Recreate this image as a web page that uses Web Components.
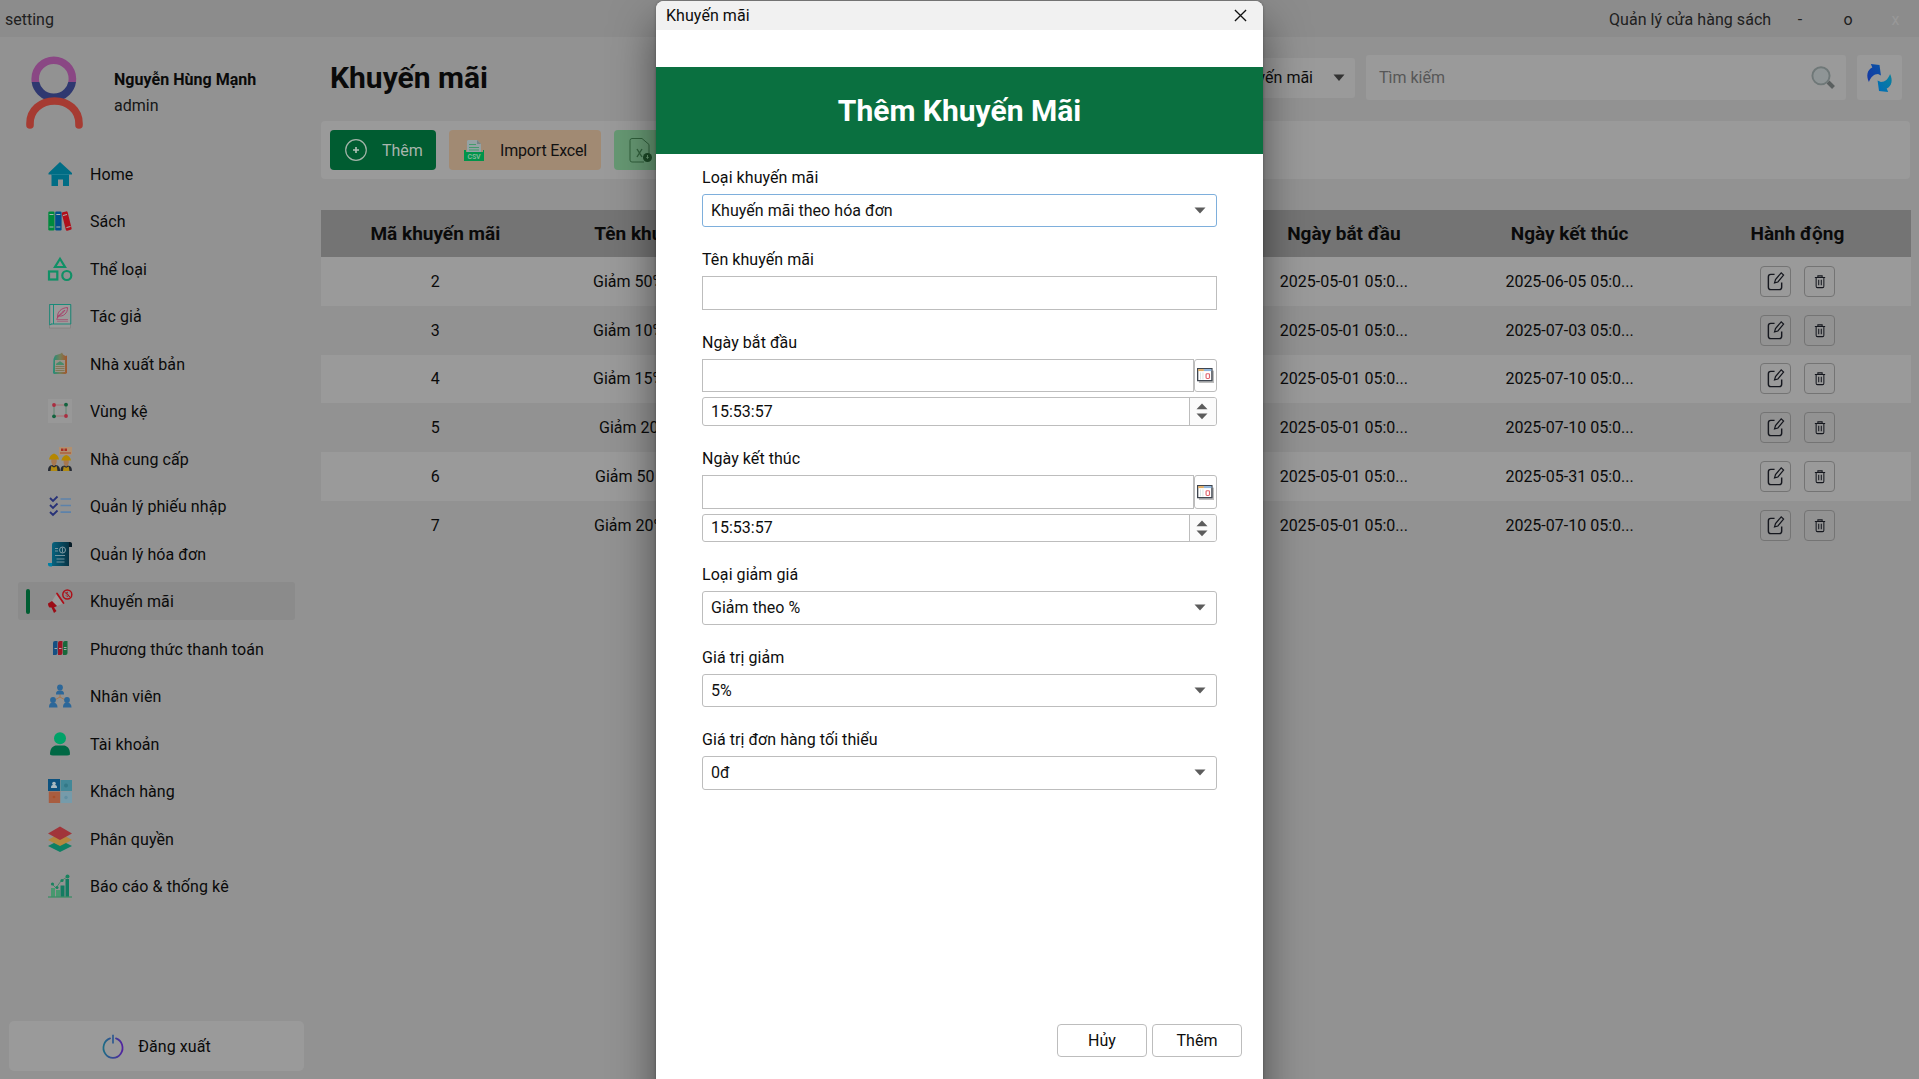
<!DOCTYPE html>
<html lang="vi">
<head>
<meta charset="utf-8">
<title>Quản lý cửa hàng sách</title>
<style>
html,body{margin:0;height:100%;overflow:hidden;background:#929292;font-family:Roboto,"Liberation Sans",sans-serif;font-size:16px;color:#0a0a0a}
</style>
</head>
<body>
<store-app></store-app>
<script>
const ICONS = {
avatar:['0 0 57 73','<defs><clipPath id="t"><rect width="57" height="26"/></clipPath><clipPath id="b"><rect y="26" width="57" height="30"/></clipPath></defs><g fill="none" stroke-width="7.6"><circle cx="27.8" cy="22.8" r="18.6" stroke="#8a4784" clip-path="url(#t)"/><circle cx="27.8" cy="22.8" r="18.6" stroke="#2f3870" clip-path="url(#b)"/><path d="M4 69V67.500C4 54 15 45 28.500 45S53 54 53 67.500V69" stroke="#a63b32" stroke-linecap="round"/></g>'],
home:['0 0 24 24','<path d="M12 0 24 11v1.500h-3V24h-6v-6.500H10V24H3.500V12.500H.5V11z" fill="#006d85"/><path d="M3.500 12.500h17.500" stroke="#27859a" stroke-width=".7"/>'],
books:['0 0 24 24','<rect x=".3" y="2.500" width="6.200" height="19" rx="1.300" fill="#008a3d"/><rect x="7.200" y="2.500" width="6.400" height="19" rx="1.300" fill="#00508c"/><rect x="15.700" y="2.600" width="6" height="19" rx="1.300" fill="#b0101c" transform="rotate(-14 18.500 12)"/><g fill="none" stroke="#a9b5b2" stroke-width="1"><path d="M1.500 5.500h4M1.500 18h4M8.300 5.500h4M8.300 18h4M15 6.500l4-1M18.500 18.500l4-1"/></g>'],
shapes:['0 0 24 24','<g fill="none" stroke="#109066" stroke-width="2.200"><path d="M12 1.800 17 10H7z"/><rect x="1" y="14.500" width="8.300" height="8"/><circle cx="18.800" cy="18.500" r="4.500"/></g>'],
author:['0 0 24 24','<rect x="1.700" y=".5" width="21" height="23.500" fill="#9b9b9b" stroke="#7a7471" stroke-width=".5"/><path d="M1.700 21V.5H22.800V20H3M5.500.5V20M1.700 21l2-1" fill="none" stroke="#0d8a78" stroke-width=".9"/><path d="M9.500 14C9 8 13 4 19.500 3.500 20 9 15 13 10.500 12M8.500 15.500c3-5 6-8 8-9M10 12c3-1 5-3 7-6" fill="none" stroke="#a83b68" stroke-width=".9"/><path d="M9 15.500h11M9 17.200h11" stroke="#a35a76" stroke-width=".9"/>'],
publisher:['0 0 24 24','<defs><linearGradient id="g"><stop stop-color="#1f8d78"/><stop offset=".5" stop-color="#74805a"/><stop offset="1" stop-color="#a2562b"/></linearGradient></defs><path d="M5.500 7 7 3.500 13 1.500 14 .500 15 2.500 17.500 4 19 3.500V21L17.500 22H6L5 21z" fill="url(#g)"/><path d="M7 8h10v12H7z" fill="#99938a"/><path d="M8 13c0-3 3-2 4-4 1 2 4 1 4 4z" fill="#488b6b"/><path d="M7.500 14.500h9M7.500 16.500h9M7.500 18.500h9" stroke="#7d7550" stroke-width=".9"/>'],
area:['0 0 24 24','<rect width="24" height="24" fill="#989898"/><path d="M6 6h12M6 17h12" stroke="#aa6268" stroke-width=".8"/><path d="M6 6v11M18 6v11" stroke="#538068" stroke-width=".8"/><g fill="#aa2d40"><circle cx="6" cy="6" r="1.900"/><circle cx="18" cy="17" r="1.900"/></g><g fill="#12633f"><circle cx="18" cy="5.700" r="1.900"/><circle cx="6" cy="17.300" r="1.900"/></g>'],
supplier:['0 0 24 24','<path d="M11 0h13v6.500l-1 1.500H11z" fill="#b2906f"/><path d="M13 1.500h2.500v2.500h-2.500zM16.500 1.500h2.500v2.500h-2.500z" fill="#a72e24"/><path d="M12 6h11" stroke="#ab5a36" stroke-width="1.300"/><g><path d="M0 24c0-5 2-6 6-6s6 1 6 6z" fill="#252a34"/><path d="M2.500 24l.8-5L6 20.500 8.700 19l.8 5z" fill="#b08a13"/><path d="M3.300 12h5.400v3q-1 4-2.700 4t-2.700-4z" fill="#a67850"/><path d="M1 12.500c.5-3 2-5 5-6 3 1 4.500 3 5 6z" fill="#b58700"/></g><g transform="translate(12.500 2) scale(.95 .92)"><path d="M0 24c0-5 2-6 6-6s6 1 6 6z" fill="#252a34"/><path d="M2.500 24l.8-5L6 20.500 8.700 19l.8 5z" fill="#b08a13"/><path d="M3.300 12h5.400v3q-1 4-2.700 4t-2.700-4z" fill="#a67850"/><path d="M1 12.500c.5-3 2-5 5-6 3 1 4.500 3 5 6z" fill="#b58700"/></g>'],
checks:['0 0 24 24','<path d="m2 4 3 3L9.500 2.500M2 11l3 3 4.500-4.500M2 18l3 3 4.500-4.500" fill="none" stroke="#283278" stroke-width="1.800"/><path d="M12.500 5H23M12.500 11.500H23M12.500 18.200H23" stroke="#5d82aa" stroke-width="1.700"/>'],
invoice:['0 0 24 24','<defs><linearGradient id="i"><stop stop-color="#06627e"/><stop offset="1" stop-color="#073344"/></linearGradient></defs><path d="M19 0h3c1.500 0 2 1 2 2v3h-4z" fill="#071c27"/><path d="M4 3c0-2 1-3 3-3h14v24H4z" fill="url(#i)"/><path d="M0 21h4v3.500H2c-1 0-2-1-2-2z" fill="#0080a4"/><circle cx="14.500" cy="8" r="3" fill="none" stroke="#829ba4"/><path d="M14.500 5.500v5M7 6.500h3M7 9h3M7 13.500h10M8.500 17h8M8.500 20h8" stroke="#829ba4" stroke-width=".9"/>'],
promo:['0 0 24 24','<path d="M4 12 9 4l7.500 10L9 17z" fill="#9b9b9b"/><path d="M0 14.500 4 12 9 17 6 18.500 8.500 22 6 24 3.500 18.500H1.500C.5 17.500 0 16 0 14.500z" fill="#9c0c16"/><path d="m9 4.500 6.500 9.500" stroke="#ad1019" stroke-width="1.800" stroke-linecap="round"/><circle cx="19.300" cy="5.500" r="4.500" fill="none" stroke="#ad1019" stroke-width="1.500"/><path d="m16.500 3 5.500 5M18 6.500c1 2 4 0 2-1s-2-3 0-2" fill="none" stroke="#ad1019" stroke-width="1"/>'],
pay:['0 0 24 24','<path d="M5 6q0-2 2-2h2.500v12q0 2-2 2H5z" fill="#154f82"/><path d="M10 6q0-2 2-2h2.500v12q0 2-2 2H10z" fill="#9b1524"/><path d="M15 6q0-2 2-2h2.500v12q0 2-2 2H15z" fill="#17693b"/><path d="M6.500 11.500h2.500M11 11.500h2.500M15.800 10.500h2.700M15.800 12.500h2.700" stroke="#a6a6a6" stroke-width="1.100"/>'],
staff:['0 0 24 24','<path d="m5 17 7-4 7 4M12 10v3" fill="none" stroke="#a5774f" stroke-width="1"/><g fill="#2c6799"><circle cx="12" cy="3.500" r="2.900"/><path d="M8 10.500c0-3 1-4 4-4s4 1 4 4z"/><circle cx="5" cy="16" r="2.900"/><path d="M1 23.500c0-3 1-5 4-5s4.500 2 4.500 5z"/><circle cx="19" cy="16" r="2.900"/><path d="M15 23.500c0-3 1-5 4-5s4.500 2 4.500 5z"/></g>'],
account:['0 0 24 24','<circle cx="12" cy="6.300" r="6" fill="#00a268"/><path d="M2 22.500C2 16 5 13.500 9 13.500h6c4 0 7 2.500 7 9q-1 1-3 1H5q-2 0-3-1z" fill="#006844"/>'],
customer:['0 0 24 24','<path d="M0 0h12v12H0z" fill="#0d527f"/><path d="M12.500 1H24v11H12.500z" fill="#428898"/><path d="M.8 12.500h11.500V24H.8z" fill="#a85d40"/><path d="M12.500 12.500H24V24H12.500z" fill="#769baa"/><path d="M3 9c0-3 1-3 3-3s3 0 3 3z" fill="#a9b9c1"/><circle cx="6" cy="4.500" r="1.800" fill="#a9b9c1"/><circle cx="18" cy="6.500" r="2" fill="#337887"/><circle cx="6" cy="18" r="1.300" fill="#a74f2a"/><circle cx="18" cy="18.500" r="1.700" fill="#628fa1"/>'],
layers:['0 0 24 24','<path d="m0 19 12-6 12 6-12 6z" fill="#0e8064"/><path d="m0 13 12-7 12 7-12 6z" fill="#b3873e"/><path d="m0 6.500 12-7 12 7-12 6.500z" fill="#a1353a"/>'],
report:['0 0 24 24','<path d="M3 14h4v9H3zM8 16h4v7H8z" fill="#48986f"/><path d="M12.500 11.500h4V23h-4zM17.500 5H21v18h-3.500z" fill="#137b61"/><path d="m4 10 4 4 5-7 6-4" fill="none" stroke="#48866a" stroke-width="1"/><g fill="#19835e"><circle cx="4.500" cy="10" r="1.600"/><circle cx="9" cy="13.500" r="1.500"/><circle cx="14" cy="6.500" r="1.600"/><circle cx="19.500" cy="2.500" r="2"/></g><path d="M0 23h24" stroke="#3d8e67" stroke-width="1.300"/>'],
power:['0 0 24 26','<defs><linearGradient id="p"><stop stop-color="#1d6c86"/><stop offset="1" stop-color="#5223a0"/></linearGradient></defs><path d="M8.800 4.500A10.400 10.400 0 1 0 15.200 4.500" fill="none" stroke="url(#p)" stroke-width="1.900" stroke-linecap="round"/><path d="M12 .8v9" stroke="#2f5a91" stroke-width="1.900"/>'],
plus:['0 0 24 24','<circle cx="12" cy="12" r="10.300" fill="none" stroke="#a3b4a9" stroke-width="1.200"/><path d="M12 9v6M9 12h6" stroke="#b3c2b9" stroke-width="1.600"/>'],
csv:['0 0 24 24','<path d="M6 2h9l4 4v10H5V3z" fill="#94a2a4"/><path d="m15 2 4 4h-4z" fill="#758386"/><path d="M7 6.500h7M7 9.500h10M7 12h10" stroke="#439b6c" stroke-width="1.100"/><path d="M2 12h2v2h17v-2h1v11H2z" fill="#00944a"/><text x="12" y="21" text-anchor="middle" font-family="Roboto" font-weight="700" font-size="7" fill="#82b799">CSV</text>'],
xls:['0 0 24 26','<path d="M3 1.500h10l7 6V20M15 25H3q-2 0-2-2V3.500q0-2 2-2" fill="none" stroke="#31613c" stroke-width="1"/><path d="m8 12 5 8M13 12l-5 8" stroke="#31613c" stroke-width="1.400"/><circle cx="18.500" cy="20.500" r="4.500" fill="#1c4b27"/><path d="M18.500 18v3M17.500 20l1 1.500 1-1.500" stroke="#6a9c74" fill="none"/>'],
search:['0 0 24 24','<path d="m17 16 5.500 5.500" stroke="#5a5f5f" stroke-width="4"/><circle cx="10" cy="9.800" r="8.600" fill="#8f9596" stroke="#6f7878" stroke-width="1.900"/>'],
refresh:['0 0 26 30','<defs><linearGradient id="r1" x1="0" y1="1" x2="1" y2="0"><stop stop-color="#1736a3"/><stop offset="1" stop-color="#0753a6"/></linearGradient><linearGradient id="r2" x1="0" y1="1" x2="1" y2="0"><stop stop-color="#006bb8"/><stop offset="1" stop-color="#0b829b"/></linearGradient></defs><path d="M2 19C-1 13 0 7 5.500 4.500L4 1 13 2 14.500 12.500 11.500 11C7 11 4 14 2 19z" fill="url(#r1)"/><path d="M24 11c3 6 2 12-3.500 14.500l1.500 3.500-9.500-1-1.500-10.500 3.500 1.500c4.500 0 7.500-3 9.500-8z" fill="url(#r2)"/>'],
edit:['0 0 20 22','<path d="M9 3.500H5Q2.500 3.500 2.500 6v11Q2.500 19.500 5 19.500H14q2.500 0 2.500-2.500v-5" fill="none" stroke="#15171e" stroke-width="1.500"/><path d="m9 12.500 1-3.500 6-7 2.500 2.300L12.500 11.500z" fill="none" stroke="#15171e" stroke-width="1.300"/>'],
trash:['0 0 14 16','<path d="M2.500 4v9q0 1.500 1.500 1.500h6q1.500 0 1.500-1.500V4M1 3.700h12M4.500 3.500V2h5v1.500M5.500 6v6M8.500 6v6" fill="none" stroke="#15171e" stroke-width="1.200"/>'],
cal:['0 0 18 17','<path d="M2 3h16v14H2z" fill="#bdbdbd"/><path d="M.7.7h15.100v13.600H.7z" fill="#fff" stroke="#3f4650" stroke-width="1.400"/><path d="M1.300 1.300h6V3.500h-6z" fill="#e3ad62"/><path d="M7.300 1.300h7.900V3.500H7.300z" fill="#8fb6dd"/><path d="M3.700 5v8M6.300 5v8" stroke="#d5e3e3"/><rect x="9.600" y="6.500" width="3.600" height="5.400" rx="1" fill="none" stroke="#e0636c" stroke-width="1.200"/>'],
close:['0 0 14 14','<path d="m1 1 12 12M13 1 1 13" stroke="#111" stroke-width="1.400"/>'],
down:['0 0 12 8','<path d="M.5.500h11L6 7z" fill="currentColor"/>'],
up:['0 0 12 8','<path d="M.5 7h11L6 .5z" fill="currentColor"/>']
};
function define(name, css, html){
  customElements.define(name, class extends HTMLElement{
    constructor(){
      super();
      const h = typeof html === 'function' ? html(this) : html;
      this.attachShadow({mode:'open'}).innerHTML = `<style>*{box-sizing:border-box}${css}</style>${h}`;
    }
  });
}
const icon = (n,w,h=w) => `<ui-icon name="${n}" w="${w}" h="${h}"></ui-icon>`;

define('ui-icon', ':host{display:block;flex:none}svg{display:block;overflow:visible}',
  e => `<svg width="${e.getAttribute('w')}" height="${e.getAttribute('h')}" viewBox="${ICONS[e.getAttribute('name')][0]}" preserveAspectRatio="none">${ICONS[e.getAttribute('name')][1]}</svg>`);

define('app-titlebar', `:host{display:flex;align-items:center;height:37px;background:#8c8c8c;color:#202020;padding:2px 0 0 5px;box-sizing:border-box;flex:none}
 .t{margin-left:auto;width:164px;white-space:nowrap;letter-spacing:.05px}.b{width:48px;text-align:center}.x{color:#989898;width:47px}.b.m{margin-left:3px}`,
 '<span>setting</span><span class="t">Quản lý cửa hàng sách</span><span class="b m">-</span><span class="b">o</span><span class="b x">x</span>');

define('user-card', `:host{display:flex;height:113px;padding:19px 0 0 26px;gap:31px;box-sizing:border-box}
 div{padding-top:11px;line-height:26px}b{display:block;letter-spacing:.03px}span{color:#161616}`,
 `${icon('avatar',57,73)}<div><b><slot></slot></b><span>admin</span></div>`);

define('nav-item', `:host{display:flex;height:47.500px;align-items:center;padding:0 10px 0 18px;box-sizing:border-box}
 div{display:flex;align-items:center;height:38px;width:277px;padding-left:8px;border-radius:3px}
 i{width:4px;height:25px;border-radius:2px;margin-right:18px}
 span{margin-left:18px;padding-top:1px;white-space:nowrap;letter-spacing:.08px}
 :host([active]) div{background:#8b8b8b}:host([active]) i{background:#005d32}`,
 e => `<div><i></i>${icon(e.getAttribute('icon'),24)}<span><slot></slot></span></div>`);

define('logout-button', `:host{display:flex;align-items:center;justify-content:center;gap:14px;height:50px;margin:auto 0 8px 9px;width:295px;background:#9a9a9a;border-radius:5px;box-sizing:border-box;letter-spacing:.08px}`,
 `${icon('power',22,25)}<span><slot></slot></span>`);

const NAV=[['home','Home'],['books','Sách'],['shapes','Thể loại'],['author','Tác giả'],['publisher','Nhà xuất bản'],['area','Vùng kệ'],['supplier','Nhà cung cấp'],['checks','Quản lý phiếu nhập'],['invoice','Quản lý hóa đơn'],['promo','Khuyến mãi'],['pay','Phương thức thanh toán'],['staff','Nhân viên'],['account','Tài khoản'],['customer','Khách hàng'],['layers','Phân quyền'],['report','Báo cáo &amp; thống kê']];
define('app-sidebar', ':host{display:flex;flex-direction:column;width:321px;flex:none}',
 `<user-card>Nguyễn Hùng Mạnh</user-card><nav>${NAV.map((n,i)=>`<nav-item icon="${n[0]}"${i==9?' active':''}>${n[1]}</nav-item>`).join('')}</nav><logout-button>Đăng xuất</logout-button>`);

define('page-header', `:host{display:flex;align-items:center;height:84px;padding:0 17px 0 9px;box-sizing:border-box}
 h1{margin:-2px auto 0 0;font-size:30px;line-height:40px}
 .c,.s,.r{background:#9a9a9a;border-radius:3px;display:flex;align-items:center;margin-top:-3px}
 .c{width:200px;height:40px;justify-content:flex-end;gap:20px;padding-right:10px;margin-right:11px;color:#0d0d0d}
 .c ui-icon{color:#333}
 .s{width:480px;height:45px;padding:0 11px 0 13px;justify-content:space-between;color:#575757;margin-right:11px}
 .r{width:45px;height:45px;justify-content:center}`,
 `<h1>Khuyến mãi</h1><div class="c"><span>Tên khuyến mãi</span>${icon('down',12,8)}</div><div class="s"><span>Tìm kiếm</span>${icon('search',24)}</div><div class="r">${icon('refresh',25,30)}</div>`);

define('tool-button', `:host{display:flex;align-items:center;height:40px;border-radius:4px;box-sizing:border-box;padding:0 14px;gap:14px;white-space:nowrap}`,
 e => `${icon(e.getAttribute('icon'),24,e.getAttribute('icon')=='xls'?26:24)}<span><slot></slot></span>`);
define('tool-bar', `:host{display:flex;align-items:center;gap:13px;height:58px;background:#9a9a9a;padding-left:9px;border-radius:4px;width:1589px;box-sizing:border-box}
 .a{background:#005c31;color:#a8b5ad;width:106px}.b{background:#a18a73;width:152px;color:#111;letter-spacing:-.18px;padding-left:13px}.c{background:#669873;width:150px;padding-left:15px}`,
 `<tool-button class="a" icon="plus">Thêm</tool-button><tool-button class="b" icon="csv">Import Excel</tool-button><tool-button class="c" icon="xls"></tool-button>`);

define('row-actions', `:host{display:flex;gap:13px;justify-content:center;padding-left:1px}
 button{all:unset;box-sizing:border-box;width:31px;height:31px;border:1px solid #747474;border-radius:4px;display:flex;align-items:center;justify-content:center}`,
 `<button>${icon('edit',19,21)}</button><button>${icon('trash',12,15)}</button>`);

const ROWS=[['2','Giảm 50%',272,'2025-06-05 05:0...'],['3','Giảm 10%',272,'2025-07-03 05:0...'],['4','Giảm 15%',272,'2025-07-10 05:0...'],['5','Giảm 20',278,'2025-07-10 05:0...'],['6','Giảm 50',274,'2025-05-31 05:0...'],['7','Giảm 20%',273,'2025-07-10 05:0...']];
define('promo-table', `:host{display:block;margin-top:31px;width:1590px}
 .r{display:grid;grid-template-columns:repeat(7,1fr);align-items:center;text-align:center;height:48.800px;white-space:nowrap}
 .w{background:#9a9a9a}.h{height:47px;background:#747474;font-weight:700;font-size:19px}.n{text-align:left}
 .p{padding-left:1.500px}.m{padding-right:1.500px}`,
 `<div class="r h"><span class="p">Mã khuyến mãi</span><span>Tên khuyến mãi</span><span></span><span></span><span class="p">Ngày bắt đầu</span><span class="m">Ngày kết thúc</span><span>Hành động</span></div>`+
 ROWS.map((r,i)=>`<div class="r ${i%2?'':'w'}"><span class="p">${r[0]}</span><span class="n" style="padding-left:${r[2]-227.1}px">${r[1]}</span><span></span><span></span><span class="p">2025-05-01 05:0...</span><span class="m">${r[3]}</span><row-actions></row-actions></div>`).join(''));

const BOX='box-sizing:border-box;border:1px solid #bdbdbd;background:#fff;';
define('form-field', ':host{display:block}label{display:block;height:19px;line-height:20px;margin-bottom:7px;letter-spacing:.06px}div{display:flex;flex-direction:column;gap:5px}',
 e => `<label>${e.getAttribute('label')}</label><div><slot></slot></div>`);
define('combo-box', `:host{display:flex;align-items:center;justify-content:space-between;height:34px;padding:0 10px 1px 8px;border-radius:3px;color:#111;letter-spacing:.04px;${BOX}}
 :host([short]){height:33px;padding-bottom:0}
 :host([focused]){border-color:#7eafdc}ui-icon{color:#5c5c5c}`, `<span><slot></slot></span>${icon('down',12,7.5)}`);
define('text-box', `:host{display:block;height:34px;${BOX}}`, '');
define('date-box', `:host{display:flex;height:34px}.i{flex:1;${BOX}}.b{width:23px;border-radius:3px;display:flex;align-items:center;justify-content:center;${BOX}}`,
 `<div class="i"></div><div class="b">${icon('cal',17,15)}</div>`);
define('time-box', `:host{display:flex;align-items:stretch;height:29px;line-height:27px;border-radius:3px;overflow:hidden;${BOX}}span{flex:1;padding-left:8px}
 div{width:27px;padding-right:2px;border-left:1px solid #bdbdbd;background:#fbfbfb;display:flex;flex-direction:column;gap:3px;align-items:center;justify-content:center;color:#5c5c5c}`,
 `<span><slot></slot></span><div>${icon('up',12,7)}${icon('down',12,7)}</div>`);
define('dialog-button', `:host{display:flex;align-items:center;justify-content:center;width:90px;height:33px;border-radius:4px;${BOX}}`,'<slot></slot>');

define('promo-dialog', `:host{position:absolute;left:656px;top:1px;width:607px;height:1098px;background:#fff;border-radius:8px 8px 0 0;box-shadow:0 22px 44px rgba(0,0,0,.5),0 0 3px rgba(0,0,0,.3);display:flex;flex-direction:column;color:#0d0d0d;overflow:hidden}
 .t{display:flex;justify-content:space-between;align-items:center;height:29px;background:#f1f1f1;padding:0 16px 0 10px;flex:none}
 .t span{letter-spacing:.06px}
 h2{margin:37px 0 0;height:87px;line-height:87px;background:#0a7040;color:#fff;text-align:center;font-size:30px;flex:none}
 form{display:flex;flex-direction:column;padding:14px 46px 0}
 form-field+form-field{margin-top:23px}
 .f{margin-top:auto;display:flex;justify-content:flex-end;gap:5px;padding:0 21px 42px 0}`,
 `<div class="t"><span>Khuyến mãi</span>${icon('close',13)}</div><h2>Thêm Khuyến Mãi</h2>
 <form>
 <form-field label="Loại khuyến mãi"><combo-box focused short>Khuyến mãi theo hóa đơn</combo-box></form-field>
 <form-field label="Tên khuyến mãi"><text-box></text-box></form-field>
 <form-field label="Ngày bắt đầu"><date-box style="height:33px"></date-box><time-box>15:53:57</time-box></form-field>
 <form-field label="Ngày kết thúc"><date-box></date-box><time-box style="height:28px;line-height:25px">15:53:57</time-box></form-field>
 <form-field label="Loại giảm giá"><combo-box>Giảm theo %</combo-box></form-field>
 <form-field label="Giá trị giảm"><combo-box short>5%</combo-box></form-field>
 <form-field label="Giá trị đơn hàng tối thiểu"><combo-box>0đ</combo-box></form-field>
 </form>
 <div class="f"><dialog-button>Hủy</dialog-button><dialog-button>Thêm</dialog-button></div>`);

define('store-app', ':host{display:flex;flex-direction:column;height:1079px;width:1919px;position:relative;overflow:hidden}.b{display:flex;flex:1}main{flex:1;min-width:0}',
 `<app-titlebar></app-titlebar><div class="b"><app-sidebar></app-sidebar><main><page-header></page-header><tool-bar></tool-bar><promo-table></promo-table></main></div><promo-dialog></promo-dialog>`);
</script>
</body>
</html>
